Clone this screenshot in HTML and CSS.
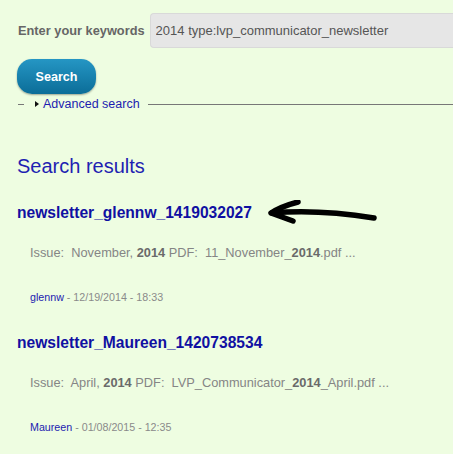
FILE: index.html
```html
<!DOCTYPE html>
<html lang="en">
<head>
    <meta charset="UTF-8">
    <meta name="viewport" content="width=device-width, initial-scale=1.0">
    <title>Search</title>
    <link rel="stylesheet" href="styles.css">
</head>
<body>
    <form class="search-form">
        <div class="keywords">
            <label for="keys">Enter your keywords</label>
            <input type="text" id="keys" value="2014 type:lvp_communicator_newsletter">
        </div>
        <button type="button" class="search-button">Search</button>
        <div class="advanced">
            <span class="rule-short"></span>
            <span class="triangle"></span>
            <a href="#">Advanced search</a>
            <span class="rule-long"></span>
        </div>
    </form>

    <h2 class="results-title">Search results</h2>

    <ol class="results">
        <li class="result">
            <h3 class="title">
                <a href="#">newsletter_glennw_1419032027</a>
                <svg class="arrow" width="112" height="30" viewBox="0 0 112 30">
                    <path d="M4 13 Q50 9 106 18" fill="none" stroke="#000" stroke-width="5.5" stroke-linecap="round"/>
                    <path d="M30 2 Q14 6 3 13 Q14 17 25 21" fill="none" stroke="#000" stroke-width="5.5" stroke-linecap="round" stroke-linejoin="round"/>
                </svg>
            </h3>
            <p class="snippet">Issue:&nbsp; November, <strong>2014</strong> PDF:&nbsp; 11_November_<strong>2014</strong>.pdf ...</p>
            <p class="info"><a href="#">glennw</a> - 12/19/2014 - 18:33</p>
        </li>
        <li class="result">
            <h3 class="title">
                <a href="#">newsletter_Maureen_1420738534</a>
            </h3>
            <p class="snippet">Issue:&nbsp; April, <strong>2014</strong> PDF:&nbsp; LVP_Communicator_<strong>2014</strong>_April.pdf ...</p>
            <p class="info"><a href="#">Maureen</a> - 01/08/2015 - 12:35</p>
        </li>
    </ol>
</body>
</html>
```

FILE: styles.css
```css
body {
    font-family: "Liberation Sans", Arial, sans-serif;
    background-color: #eefde1;
    margin: 0;
    padding: 0 0 0 17px;
}
a {
    color: #1c1cb0;
    text-decoration: none;
}
.search-form {
    padding-top: 13px;
}
.keywords {
    display: flex;
    align-items: center;
    gap: 5px;
}
.keywords label {
    font-size: 12.8px;
    font-weight: bold;
    color: #666;
    padding-left: 1px;
}
.keywords input {
    flex: 1;
    min-width: 0;
    height: 35px;
    box-sizing: border-box;
    padding: 0 5px;
    font-family: inherit;
    font-size: 13px;
    color: #555;
    background-color: #e6e6e6;
    border: 1px solid #d9d9d9;
    border-right: none;
    border-radius: 4px 0 0 4px;
}
.search-button {
    display: block;
    margin-top: 11px;
    width: 79px;
    height: 35px;
    padding: 0;
    font-family: inherit;
    font-size: 12.6px;
    font-weight: bold;
    color: #fff;
    background: linear-gradient(#2596c4, #0b6d98);
    border: none;
    border-radius: 15px;
    box-shadow: 0 1px 2px rgba(0, 0, 0, 0.35);
}
.advanced {
    display: flex;
    align-items: center;
    margin-top: 3px;
    height: 14px;
    font-size: 12.5px;
    line-height: 14px;
}
.rule-short {
    width: 6px;
    height: 1px;
    margin-left: 1px;
    background-color: #777;
}
.triangle {
    width: 0;
    height: 0;
    margin-left: 11px;
    margin-right: 4px;
    border-top: 3.5px solid transparent;
    border-bottom: 3.5px solid transparent;
    border-left: 4px solid #111;
}
.rule-long {
    flex: 1;
    height: 1px;
    margin-left: 8px;
    background-color: #777;
}
.results-title {
    margin: 43px 0 0;
    font-size: 20px;
    line-height: 24px;
    font-weight: normal;
    color: #1f1fb2;
}
.results {
    list-style: none;
    margin: 25px 0 0;
    padding: 0;
}
.result {
    margin-bottom: 29px;
}
.title {
    position: relative;
    margin: 0;
    font-size: 15.6px;
    line-height: 20px;
    font-weight: bold;
}
.title a {
    color: #1010a2;
}
.arrow {
    position: absolute;
    left: 251px;
    top: -3px;
}
.snippet {
    margin: 22px 0 0;
    padding-left: 13px;
    font-size: 12.8px;
    line-height: 16px;
    color: #858585;
}
.snippet strong {
    color: #6a6a6a;
}
.info {
    margin: 29px 0 0;
    padding-left: 13px;
    font-size: 10.7px;
    line-height: 14px;
    color: #8a8a8a;
}
```
